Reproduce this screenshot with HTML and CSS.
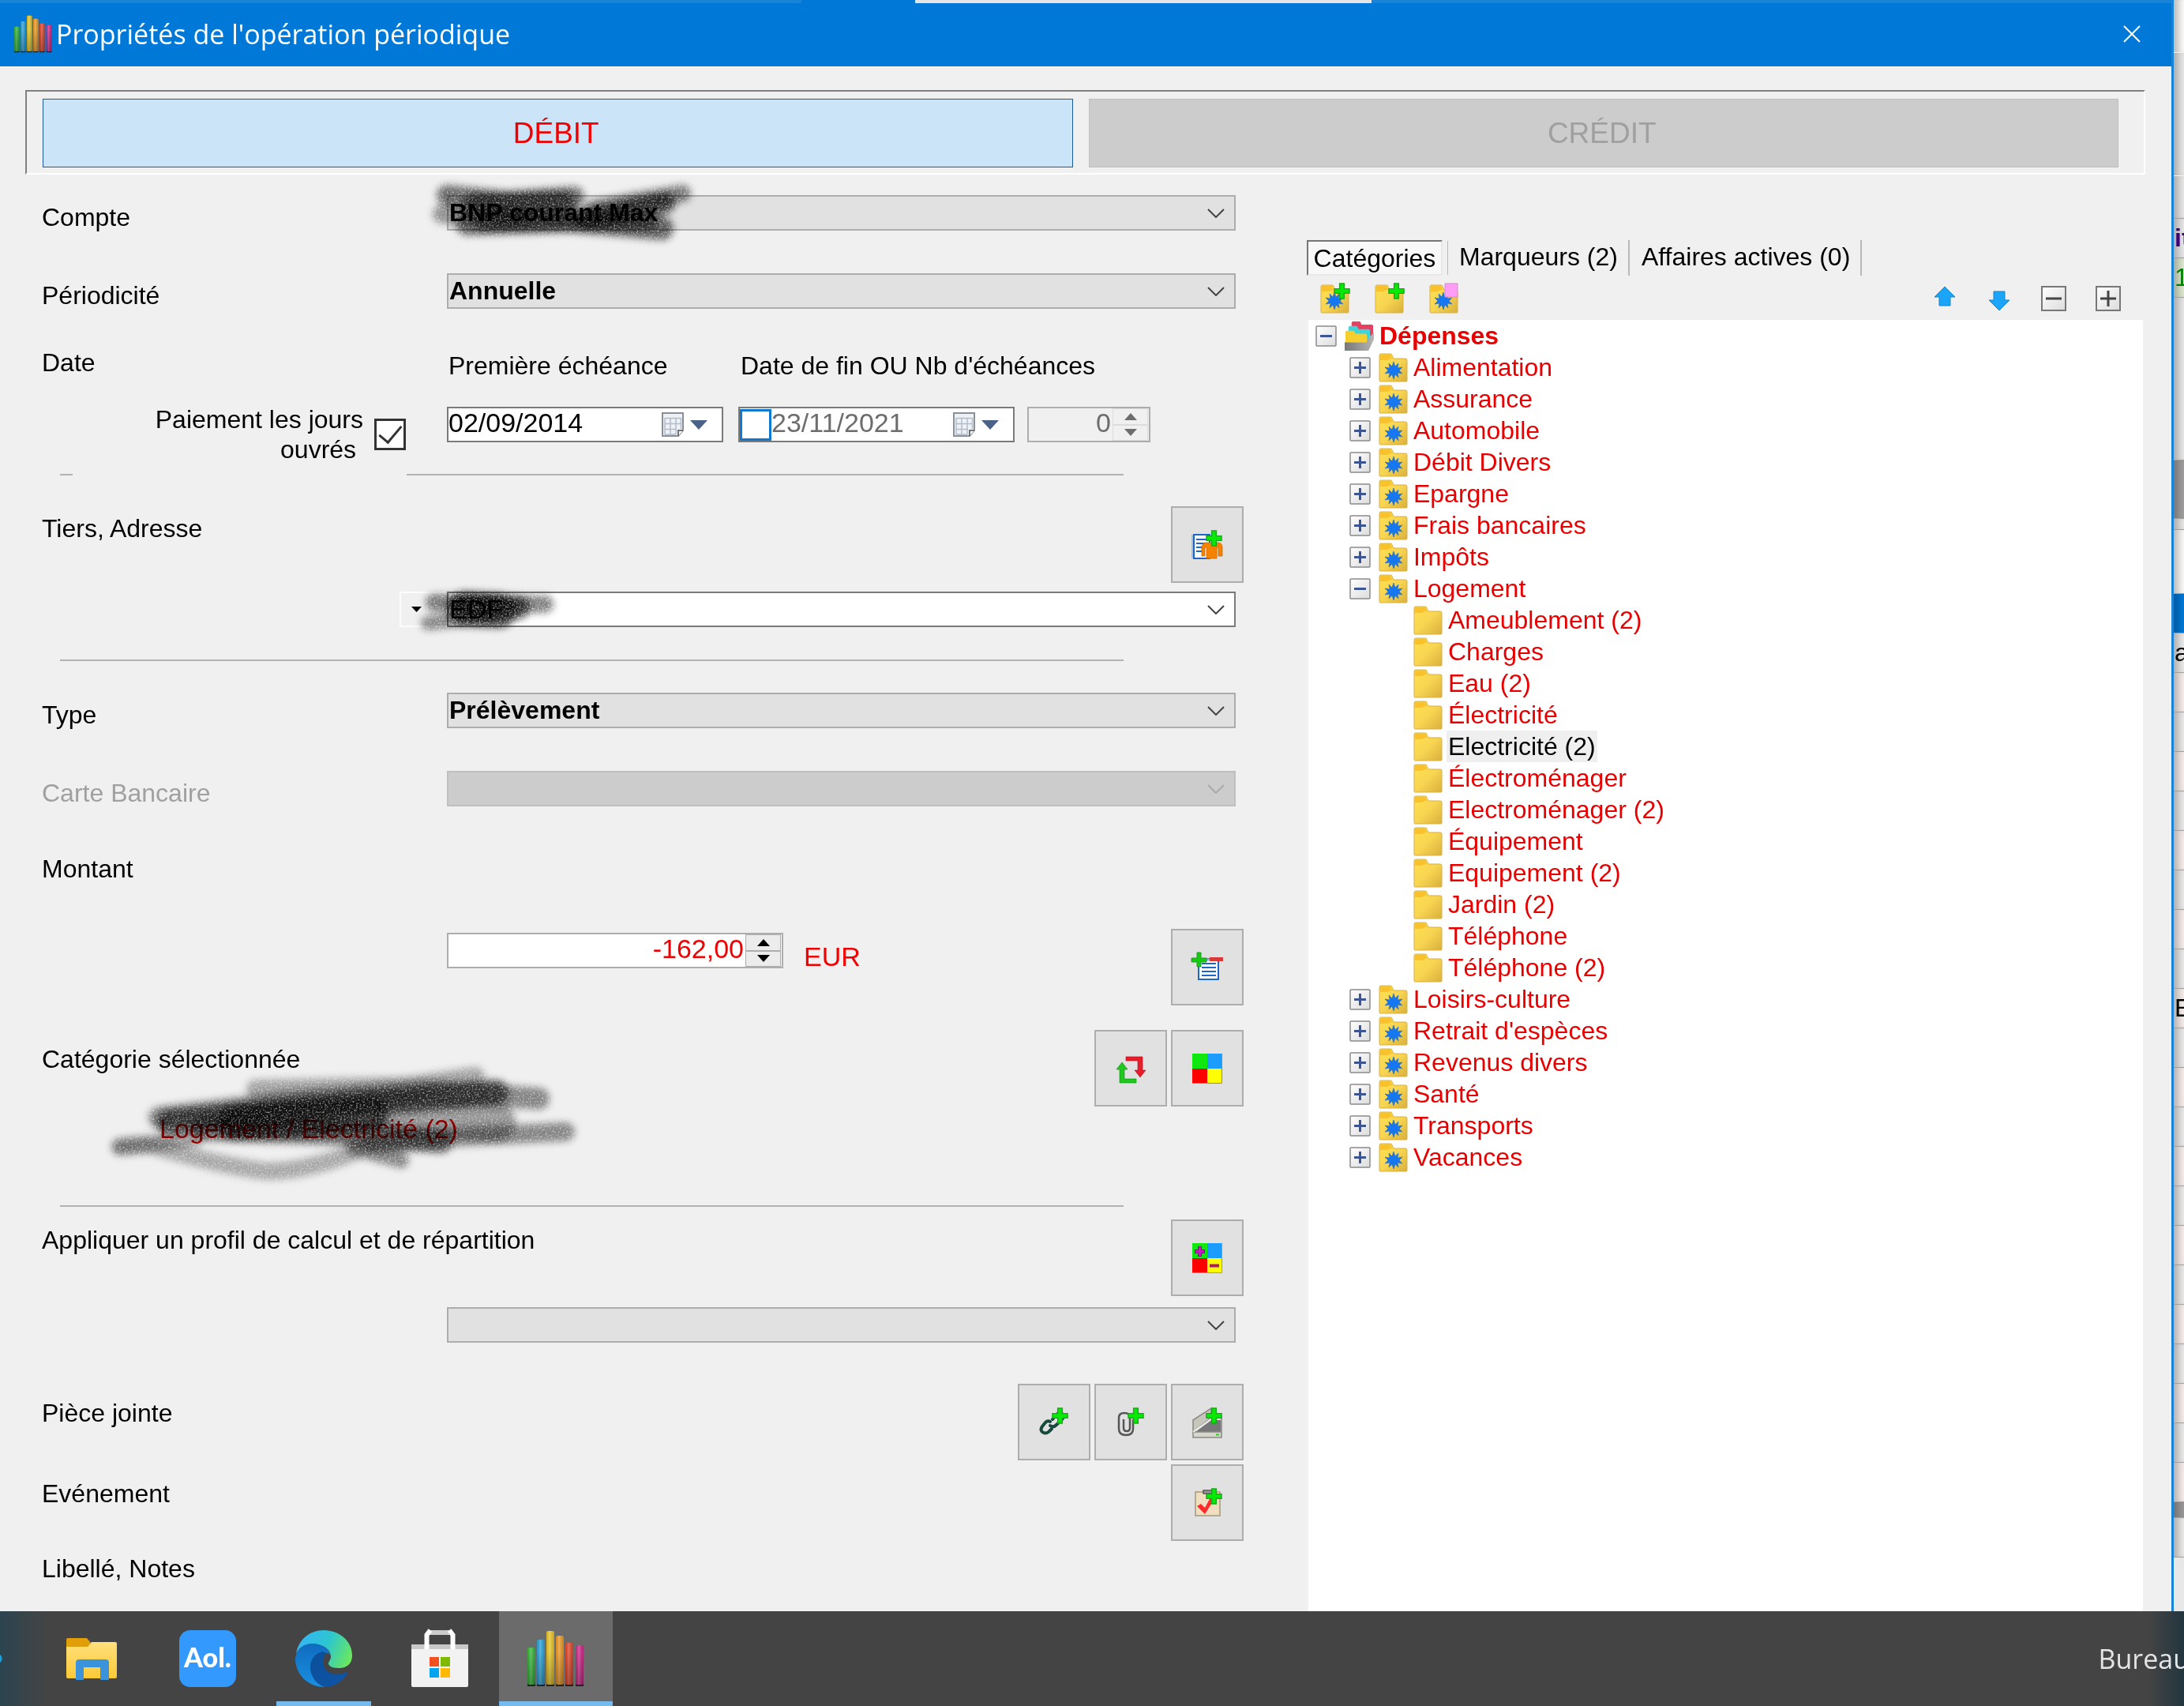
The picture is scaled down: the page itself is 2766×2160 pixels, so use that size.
FILE: index.html
```html
<!DOCTYPE html>
<html lang="fr">
<head>
<meta charset="utf-8">
<title>Propriétés de l'opération périodique</title>
<link rel="stylesheet" href="styles.css">
</head>
<body>
<svg class="defs" aria-hidden="true">
  <defs>
    <linearGradient id="g-folder" x1="0" y1="0" x2="1" y2="1"><stop offset="0" stop-color="#ffe04f"/><stop offset=".5" stop-color="#f8d552"/><stop offset="1" stop-color="#d9b03c"/></linearGradient>
    <linearGradient id="g-box" x1="0" y1="0" x2="1" y2="1"><stop offset="0" stop-color="#fff"/><stop offset="1" stop-color="#dcdcdc"/></linearGradient>
    <linearGradient id="g-tray" x1="0" y1="0" x2="1" y2="0"><stop offset="0" stop-color="#777"/><stop offset="1" stop-color="#b5b5b5"/></linearGradient>
    <linearGradient id="g-edge1" x1="0" y1=".4" x2="1" y2=".7"><stop offset="0" stop-color="#35b5f5"/><stop offset=".5" stop-color="#2cc6d0"/><stop offset="1" stop-color="#6ce85a"/></linearGradient>
    <linearGradient id="g-edge2" x1="0" y1="0" x2="0" y2="1"><stop offset="0" stop-color="#0f6cc0"/><stop offset="1" stop-color="#1a90e0"/></linearGradient>
    <linearGradient id="g-edge3" x1="0" y1="0" x2="1" y2="1"><stop offset="0" stop-color="#0a4f98"/><stop offset="1" stop-color="#1055a8"/></linearGradient>
    <linearGradient id="g-exp" x1="0" y1="0" x2="0" y2="1"><stop offset="0" stop-color="#ffe07c"/><stop offset="1" stop-color="#fec937"/></linearGradient>
    <linearGradient id="g-shine" x1="0" y1="0" x2="1" y2="0"><stop offset="0" stop-color="#000" stop-opacity=".08"/><stop offset=".4" stop-color="#fff" stop-opacity=".22"/><stop offset="1" stop-color="#000" stop-opacity=".15"/></linearGradient>
    <linearGradient id="g-shade" x1="0" y1="0" x2="0" y2="1"><stop offset="0" stop-color="#000" stop-opacity="0"/><stop offset="1" stop-color="#000" stop-opacity=".25"/></linearGradient>
    <filter id="brush" filterUnits="userSpaceOnUse" x="-40" y="-40" width="720" height="260">
      <feGaussianBlur in="SourceGraphic" stdDeviation="5" result="soft"/>
      <feTurbulence type="fractalNoise" baseFrequency=".45" numOctaves="2" seed="4" result="noise"/>
      <feColorMatrix in="noise" type="matrix" values="0 0 0 0 0  0 0 0 0 0  0 0 0 0 0  0 0 0 1.6 .15" result="grain"/>
      <feComposite in="soft" in2="grain" operator="in"/>
    </filter>
  </defs>
  <symbol id="i-chevron" viewBox="0 0 22 12"><path d="M1 1 11 11 21 1" fill="none" stroke="currentColor" stroke-width="2"/></symbol>
  <symbol id="i-plus" viewBox="0 0 22 22"><path d="M8 1h6v7h7v6h-7v7H8v-7H1V8h7z" fill="#06ea06" stroke="#1ea51e" stroke-width="1.5"/></symbol>
  <symbol id="i-star" viewBox="0 0 24 24"><path d="M12 1 14 7 18 3 17 9 23 8 19 12 23 16 17 15 18 21 14 17 12 23 10 17 6 21 7 15 1 16 5 12 1 8 7 9 6 3 10 7z" fill="#1577f2" stroke="#2b6aa8" stroke-width=".6"/></symbol>
  <symbol id="i-folder" viewBox="0 0 37 37"><path d="M1 35V3q0-2 2-2h12q2 0 2 2l2 4h15q2 0 2 2v26q0 1-1 1H2q-1 0-1-1z" fill="url(#g-folder)" stroke="#d8b040" stroke-width="1"/><path d="M2 9V3q0-1 1-1h12l2 5q-4 0-6 2z" fill="#f9c22c"/></symbol>
  <symbol id="i-cat" viewBox="0 0 37 37"><use href="#i-folder"/><use href="#i-star" x="7" y="10" width="24" height="24"/></symbol>
  <symbol id="i-drawer" viewBox="0 0 38 38"><path d="M9 2q0-2 2-2h9l2 4h13q2 0 2 2v13H9z" fill="#e84060"/><path d="M5 8q0-2 2-2h9l2 4h13q2 0 2 2v13H5z" fill="#3fd3da"/><path d="M38 14v9L31 38H0V27h27z" fill="url(#g-tray)"/><path d="M1 14q0-2 2-2h9l2 4h13q2 0 2 2v9H1z" fill="#f6cf2f"/></symbol>
  <symbol id="i-open" viewBox="0 0 27 27"><rect x="1" y="1" width="25" height="25" rx="1" fill="url(#g-box)" stroke="#8a8a8a" stroke-width="1.5"/><path d="M6 13.500h15" stroke="#3b5595" stroke-width="3"/></symbol>
  <symbol id="i-closed" viewBox="0 0 27 27"><use href="#i-open"/><path d="M13.500 6v15" stroke="#3b5595" stroke-width="3"/></symbol>
  <symbol id="i-cal" viewBox="0 0 28 32"><path d="M1 1h26v22l-6 7H1z" fill="#eef1f5" stroke="#8b9097" stroke-width="2"/><path d="M21 30v-7h6" fill="#fff" stroke="#6f747b" stroke-width="2"/><path d="M4 7.500h20M4 14.500h20M4 21.500h15M4 28h14M4 7v21M11 7v21M18 7v21M24.500 7v14" stroke="#b3bccb" stroke-width="1.500" fill="none"/></symbol>
  <symbol id="i-bars" viewBox="0 0 72 70">
    <path d="M0 67h10v3H0zM12 67h10v3H12zM24 67h10v3H24zM36 67h10v3H36zM48 67h10v3H48zM61 67h10v3H61z" fill="#222"/>
    <rect x="0" y="21" width="10" height="47" rx="2" fill="#3ab83c"/><rect x="12" y="11" width="10" height="57" rx="2" fill="#2ea3d8"/><rect x="24" y="0" width="10" height="68" rx="2" fill="#e8c62a"/><rect x="36" y="6" width="10" height="62" rx="2" fill="#ee9a26"/><rect x="48" y="15" width="10" height="53" rx="2" fill="#e2492c"/><rect x="61" y="18" width="10" height="50" rx="2" fill="#d22c8c"/>
    <g fill="url(#g-shine)"><rect x="0" y="21" width="10" height="47"/><rect x="12" y="11" width="10" height="57"/><rect x="24" y="0" width="10" height="68"/><rect x="36" y="6" width="10" height="62"/><rect x="48" y="15" width="10" height="53"/><rect x="61" y="18" width="10" height="50"/></g>
    <g fill="url(#g-shade)"><rect x="0" y="27" width="10" height="41"/><rect x="12" y="27" width="10" height="41"/><rect x="24" y="27" width="10" height="41"/><rect x="36" y="27" width="10" height="41"/><rect x="48" y="27" width="10" height="41"/><rect x="61" y="27" width="10" height="41"/></g>
  </symbol>
</svg>

<div class="desktop">
  <main class="dialog">
    <header class="titlebar">
      <div class="edge"><i></i><i></i><i></i><i></i></div>
      <div class="title">
        <svg class="app-icon"><use href="#i-bars"/></svg>
        <h1>Propriétés de l'opération périodique</h1>
        <button class="close" aria-label="Fermer"><svg viewBox="0 0 20 20"><path d="M0 0 20 20M20 0 0 20" stroke="#fff" stroke-width="2"/></svg></button>
      </div>
    </header>

    <div class="sense">
      <button class="debit">DÉBIT</button>
      <button class="credit" disabled>CRÉDIT</button>
    </div>

    <div class="panes">
      <form class="form">
        <div class="row">
          <label for="compte">Compte</label>
          <div class="combo"><select id="compte"><option>BNP courant Max</option></select><svg class="chev"><use href="#i-chevron"/></svg>
            <svg class="scribble scribble-a" viewBox="0 0 360 90" aria-hidden="true"><g filter="url(#brush)" fill="none" stroke="#000" stroke-linecap="round" stroke-linejoin="round"><path d="M24 22 100 30 185 24" stroke-width="26" stroke-opacity=".55"/><path d="M18 46 120 50" stroke-width="24" stroke-opacity=".4"/><path d="M50 58 180 54 296 64" stroke-width="30" stroke-opacity=".6"/><path d="M210 40 260 30 322 20" stroke-width="22" stroke-opacity=".5"/><path d="M200 52 300 32" stroke-width="26" stroke-opacity=".7"/><path d="M60 36 170 34" stroke-width="34" stroke-opacity=".6"/><path d="M70 58 280 56" stroke-width="22" stroke-opacity=".55"/></g></svg>
          </div>
        </div>
        <div class="row after-l">
          <label for="periode">Périodicité</label>
          <div class="combo"><select id="periode"><option>Annuelle</option></select><svg class="chev"><use href="#i-chevron"/></svg></div>
        </div>
        <div class="row heads">
          <span>Date</span>
          <div class="date-cols"><label for="d1">Première échéance</label><label for="d2">Date de fin OU Nb d'échéances</label></div>
        </div>
        <div class="row dates">
          <div class="worked"><label for="ouvres">Paiement les jours ouvrés&nbsp;</label><input class="tick" type="checkbox" id="ouvres" checked></div>
          <div class="date-fields">
            <div class="datebox"><input id="d1" type="text" value="02/09/2014"><svg class="cal"><use href="#i-cal"/></svg><svg class="drop" viewBox="0 0 22 12"><path d="M0 0h22L11 12z" fill="#4b6288"/></svg></div>
            <div class="datebox off"><input class="blue-tick" type="checkbox" aria-label="Activer la date de fin"><input id="d2" type="text" value="23/11/2021"><svg class="cal"><use href="#i-cal"/></svg><svg class="drop" viewBox="0 0 22 12"><path d="M0 0h22L11 12z" fill="#4b6288"/></svg></div>
            <div class="spin off"><input type="text" value="0" aria-label="Nombre d'échéances" disabled><div class="arrows"><button type="button" disabled aria-label="Plus"><svg viewBox="0 0 16 9"><path d="M0 9h16L8 0z"/></svg></button><button type="button" disabled aria-label="Moins"><svg viewBox="0 0 16 9"><path d="M0 0h16L8 9z"/></svg></button></div></div>
          </div>
        </div>
        <div class="rule split"><i></i><i></i></div>

        <div class="row tiers">
          <label for="tiers">Tiers, Adresse</label>
          <div class="tools"><button type="button" aria-label="Ajouter un tiers"><svg viewBox="0 0 38 38"><path d="M2 6h20v30H2z" fill="#fff" stroke="#1e66c8" stroke-width="2"/><path d="M0 6v30" stroke="#9cc0ee" stroke-width="2"/><path d="M5 12h16M5 17h14M5 22h10M5 27h8" stroke="#1e66c8" stroke-width="2"/><path d="M12 33V22q0-6 6-6h14q6 0 6 6v11h-5V22h-2v14H18V22h-2v11z" fill="#f58200" stroke="#c76a00" stroke-width=".8"/><use href="#i-plus" x="17" y="0" width="21" height="21"/></svg></button></div>
        </div>
        <div class="row tiers-field">
          <button type="button" class="mini" aria-label="Options"><svg viewBox="0 0 13 7"><path d="M0 0h13L6.500 7z"/></svg></button>
          <div class="combo white"><select id="tiers"><option>EDF</option></select><svg class="chev"><use href="#i-chevron"/></svg>
            <svg class="scribble scribble-b" viewBox="0 0 200 70" aria-hidden="true"><g filter="url(#brush)" fill="none" stroke="#000" stroke-linecap="round"><path d="M34 26 174 28" stroke-width="22" stroke-opacity=".5"/><path d="M26 52 100 44" stroke-width="18" stroke-opacity=".45"/><path d="M70 30 140 32" stroke-width="30" stroke-opacity=".65"/><path d="M72 34 116 36" stroke-width="44" stroke-opacity=".75"/></g></svg>
          </div>
        </div>
        <div class="rule"></div>

        <div class="row type">
          <label for="type">Type</label>
          <div class="combo"><select id="type"><option>Prélèvement</option></select><svg class="chev"><use href="#i-chevron"/></svg></div>
        </div>
        <div class="row after-l">
          <label for="carte" class="muted">Carte Bancaire</label>
          <div class="combo dead"><select id="carte" disabled><option></option></select><svg class="chev"><use href="#i-chevron"/></svg></div>
        </div>
        <div class="row montant"><label for="montant">Montant</label></div>
        <div class="row amount">
          <span></span>
          <div class="amount-line">
            <div class="spin money"><input id="montant" type="text" value="-162,00"><div class="arrows"><button type="button" aria-label="Augmenter"><svg viewBox="0 0 16 9"><path d="M0 9h16L8 0z"/></svg></button><button type="button" aria-label="Diminuer"><svg viewBox="0 0 16 9"><path d="M0 0h16L8 9z"/></svg></button></div></div>
            <span class="eur">EUR</span>
            <div class="tools"><button type="button" aria-label="Calculer"><svg viewBox="0 0 38 38"><path d="M8 8h25v26H8z" fill="#fff" stroke="#1e66c8" stroke-width="2"/><path d="M8 9h25" stroke="#7fb0ea" stroke-width="3"/><path d="M12 14h18M12 19h18M12 24h18M12 29h18" stroke="#1e66c8" stroke-width="2"/><path d="M22 6h17v5H22z" fill="#d83a3a"/><path d="M6 0h5v7h7v5h-7v6H6v-6H-1V7h7z" fill="#12cc12" stroke="#2a9a2a" stroke-width="1"/></svg></button></div>
          </div>
        </div>
        <div class="row cat">
          <span>Catégorie sélectionnée</span>
          <div class="tools"><button type="button" aria-label="Inverser"><svg viewBox="0 0 38 38"><path d="M13 4h21v17h4l-7 9-7-9h4V9H13z" fill="#e81d2c" stroke="#a80f1d" stroke-width=".6"/><path d="M8 11l7 9h-4v12h15v5H5V20H1z" fill="#1fc81f" stroke="#128812" stroke-width=".6"/></svg></button><button type="button" aria-label="Couleurs"><svg viewBox="0 0 38 38"><path d="M0 0h19v19H0z" fill="#0fe80f"/><path d="M19 0h18v19H19z" fill="#1a9dff"/><path d="M0 19h19v18H0z" fill="#f00"/><path d="M19 19h18v18H19z" fill="#ff0"/><path d="M37.500 0v37.500H0" fill="none" stroke="#888"/></svg></button></div>
        </div>
        <p class="chosen"><span>Logement / Electricité (2)</span>
          <svg class="scribble scribble-c" viewBox="0 0 600 160" aria-hidden="true"><g filter="url(#brush)" fill="none" stroke="#000" stroke-linecap="round" stroke-linejoin="round"><path d="M206 38 400 34 484 22" stroke-width="24" stroke-opacity=".32"/><path d="M34 111 70 108Q160 135 220 142 270 142 330 118" stroke-width="22" stroke-opacity=".3"/><path d="M34 111 70 108 130 100" stroke-width="20" stroke-opacity=".35"/><path d="M84 74 250 54 420 40 564 50" stroke-width="28" stroke-opacity=".45"/><path d="M96 80 240 66 510 42" stroke-width="32" stroke-opacity=".65"/><path d="M140 88 330 94 440 104" stroke-width="30" stroke-opacity=".6"/><path d="M180 80 350 70" stroke-width="46" stroke-opacity=".75"/><path d="M350 108 470 98 598 92" stroke-width="24" stroke-opacity=".45"/><path d="M380 70 510 80" stroke-width="50" stroke-opacity=".38"/><path d="M330 112 390 128" stroke-width="20" stroke-opacity=".45"/></g></svg>
        </p>
        <div class="rule"></div>

        <div class="row profil">
          <label for="profil">Appliquer un profil de calcul et de répartition</label>
          <div class="tools"><button type="button" aria-label="Gérer les profils"><svg viewBox="0 0 38 38"><path d="M0 0h19v19H0z" fill="#0fe80f"/><path d="M19 0h18v19H19z" fill="#1a9dff"/><path d="M0 19h19v18H0z" fill="#f00"/><path d="M19 19h18v18H19z" fill="#ff0"/><path d="M9.500 4v13M3 10.500h13" stroke="#7a1d7a" stroke-width="5"/><path d="M9.500 5v11M4 10.500h11" stroke="#c41ac4" stroke-width="3"/><path d="M22 28.500h12" stroke="#b01a70" stroke-width="4"/><path d="M37.500 0v37.500H0" fill="none" stroke="#999"/></svg></button></div>
        </div>
        <div class="row">
          <span></span>
          <div class="combo"><select id="profil"><option></option></select><svg class="chev"><use href="#i-chevron"/></svg></div>
        </div>
        <div class="row piece">
          <span>Pièce jointe</span>
          <div class="tools">
            <button type="button" aria-label="Ajouter un lien"><svg viewBox="0 0 38 38"><g fill="none" stroke="#164a3c" stroke-width="4" stroke-linecap="round"><path d="M14 18q-3-2-6 1L4 24q-3 4 0 7 4 3 8 0l4-4"/><path d="M14 23q4 3 8-1l8-8q2-3-1-6-4-2-7 1l-5 6"/></g><use href="#i-plus" x="16" y="0" width="21" height="21"/></svg></button>
            <button type="button" aria-label="Joindre un fichier"><svg viewBox="0 0 38 38"><path d="M10 15v11q0 4 4 4t4-4V13q0-6-7-6t-7 6v14q0 8 9 8t9-8V15" fill="none" stroke="#555" stroke-width="2.500"/><use href="#i-plus" x="15" y="0" width="21" height="21"/></svg></button>
            <button type="button" aria-label="Numériser"><svg viewBox="0 0 38 38"><path d="M1 16 24 1v12L1 31z" fill="#c6c6bc" stroke="#8a8a82" stroke-width="1.500"/><path d="M4 31 24 16h13v15z" fill="#77777a"/><path d="M1 31h36v7H1z" fill="#d6d6cc" stroke="#8a8a82" stroke-width="1.500"/><path d="M34 13h3v25" fill="none" stroke="#999" stroke-width="2"/><path d="M1 31 25 14" stroke="#eee" stroke-width="2"/><path d="M30 34.500h4" stroke="#1fd01f" stroke-width="2"/><use href="#i-plus" x="17" y="0" width="21" height="21"/></svg></button>
          </div>
        </div>
        <div class="row event">
          <span>Evénement</span>
          <div class="tools"><button type="button" aria-label="Ajouter un événement"><svg viewBox="0 0 38 38"><path d="M4 5h31v30H4z" fill="#efdfc0" stroke="#a8987a" stroke-width="1.500"/><path d="M14 3h11v4H14z" fill="#999" stroke="#555" stroke-width="1.500"/><path d="M6 23l5-3 5 5L23 12l5 2-12 19z" fill="#ff2a2a"/><use href="#i-plus" x="17" y="0" width="21" height="21"/></svg></button></div>
        </div>
        <div class="row notes"><span>Libellé, Notes</span></div>
      </form>

      <section class="side">
        <div class="tabs">
          <button class="on">Catégories</button><button>Marqueurs (2)</button><button>Affaires actives (0)</button>
        </div>
        <div class="bar">
          <button aria-label="Nouvelle catégorie"><svg class="ic" viewBox="0 0 37 39"><use href="#i-folder" y="2" width="37" height="37"/><use href="#i-star" x="6" y="11" width="24" height="24"/><use href="#i-plus" x="17" y="0" width="21" height="21"/></svg></button>
          <button aria-label="Nouvelle sous-catégorie"><svg class="ic" viewBox="0 0 37 39"><use href="#i-folder" y="2" width="37" height="37"/><use href="#i-plus" x="17" y="0" width="21" height="21"/></svg></button>
          <button aria-label="Modifier la catégorie"><svg class="ic" viewBox="0 0 37 39"><use href="#i-folder" y="2" width="37" height="37"/><use href="#i-star" x="6" y="11" width="24" height="24"/><path d="M20 1h16v17H20z" fill="#ff9cf5" stroke="#d88ad0"/></svg></button>
          <span class="fill"></span>
          <button aria-label="Monter"><svg class="ar" viewBox="0 0 28 32"><path d="M14 1 27 14h-6v11H7V14H1z" fill="#1aa5f8" stroke="#1883c8"/></svg></button>
          <button aria-label="Descendre"><svg class="ar" viewBox="0 0 28 32"><path d="M14 31 27 18h-6V7H7v11H1z" fill="#1aa5f8" stroke="#1883c8"/></svg></button>
          <button aria-label="Tout replier"><svg class="ar" viewBox="0 0 32 32"><path d="M1 1h30v30H1z" fill="url(#g-box)" stroke="#777" stroke-width="2"/><path d="M6 16h20" stroke="#444" stroke-width="3"/></svg></button>
          <button aria-label="Tout déplier"><svg class="ar" viewBox="0 0 32 32"><path d="M1 1h30v30H1z" fill="url(#g-box)" stroke="#777" stroke-width="2"/><path d="M6 16h20M16 6v20" stroke="#444" stroke-width="3"/></svg></button>
        </div>
        <div class="tree">
          <ul>
            <li><div class="node"><svg class="ex"><use href="#i-open"/></svg><svg class="fo"><use href="#i-drawer"/></svg><b>Dépenses</b></div>
              <ul>
                <li><div class="node"><svg class="ex"><use href="#i-closed"/></svg><svg class="fo"><use href="#i-cat"/></svg><span>Alimentation</span></div></li>
                <li><div class="node"><svg class="ex"><use href="#i-closed"/></svg><svg class="fo"><use href="#i-cat"/></svg><span>Assurance</span></div></li>
                <li><div class="node"><svg class="ex"><use href="#i-closed"/></svg><svg class="fo"><use href="#i-cat"/></svg><span>Automobile</span></div></li>
                <li><div class="node"><svg class="ex"><use href="#i-closed"/></svg><svg class="fo"><use href="#i-cat"/></svg><span>Débit Divers</span></div></li>
                <li><div class="node"><svg class="ex"><use href="#i-closed"/></svg><svg class="fo"><use href="#i-cat"/></svg><span>Epargne</span></div></li>
                <li><div class="node"><svg class="ex"><use href="#i-closed"/></svg><svg class="fo"><use href="#i-cat"/></svg><span>Frais bancaires</span></div></li>
                <li><div class="node"><svg class="ex"><use href="#i-closed"/></svg><svg class="fo"><use href="#i-cat"/></svg><span>Impôts</span></div></li>
                <li><div class="node"><svg class="ex"><use href="#i-open"/></svg><svg class="fo"><use href="#i-cat"/></svg><span>Logement</span></div>
                  <ul class="leaves">
                    <li><div class="node"><svg class="fo"><use href="#i-folder"/></svg><span>Ameublement (2)</span></div></li>
                    <li><div class="node"><svg class="fo"><use href="#i-folder"/></svg><span>Charges</span></div></li>
                    <li><div class="node"><svg class="fo"><use href="#i-folder"/></svg><span>Eau (2)</span></div></li>
                    <li><div class="node"><svg class="fo"><use href="#i-folder"/></svg><span>Électricité</span></div></li>
                    <li><div class="node"><svg class="fo"><use href="#i-folder"/></svg><span class="picked">Electricité (2)</span></div></li>
                    <li><div class="node"><svg class="fo"><use href="#i-folder"/></svg><span>Électroménager</span></div></li>
                    <li><div class="node"><svg class="fo"><use href="#i-folder"/></svg><span>Electroménager (2)</span></div></li>
                    <li><div class="node"><svg class="fo"><use href="#i-folder"/></svg><span>Équipement</span></div></li>
                    <li><div class="node"><svg class="fo"><use href="#i-folder"/></svg><span>Equipement (2)</span></div></li>
                    <li><div class="node"><svg class="fo"><use href="#i-folder"/></svg><span>Jardin (2)</span></div></li>
                    <li><div class="node"><svg class="fo"><use href="#i-folder"/></svg><span>Téléphone</span></div></li>
                    <li><div class="node"><svg class="fo"><use href="#i-folder"/></svg><span>Téléphone (2)</span></div></li>
                  </ul></li>
                <li><div class="node"><svg class="ex"><use href="#i-closed"/></svg><svg class="fo"><use href="#i-cat"/></svg><span>Loisirs-culture</span></div></li>
                <li><div class="node"><svg class="ex"><use href="#i-closed"/></svg><svg class="fo"><use href="#i-cat"/></svg><span>Retrait d'espèces</span></div></li>
                <li><div class="node"><svg class="ex"><use href="#i-closed"/></svg><svg class="fo"><use href="#i-cat"/></svg><span>Revenus divers</span></div></li>
                <li><div class="node"><svg class="ex"><use href="#i-closed"/></svg><svg class="fo"><use href="#i-cat"/></svg><span>Santé</span></div></li>
                <li><div class="node"><svg class="ex"><use href="#i-closed"/></svg><svg class="fo"><use href="#i-cat"/></svg><span>Transports</span></div></li>
                <li><div class="node"><svg class="ex"><use href="#i-closed"/></svg><svg class="fo"><use href="#i-cat"/></svg><span>Vacances</span></div></li>
              </ul></li>
          </ul>
        </div>
      </section>
    </div>
  </main>

  <aside class="behind">
    <div class="b-top"></div><div class="b-band"></div><div class="b-band2"></div>
    <div class="b-row b-it">it</div><div class="b-row b-one">1</div>
    <div class="b-gap"></div><div class="b-dark"></div><div class="b-thin"></div><div class="b-white"></div><div class="b-row b-blue"></div>
    <div class="b-row g">a</div>
    <div class="b-row p"></div><div class="b-row g"></div><div class="b-row p"></div><div class="b-row g"></div><div class="b-row p"></div><div class="b-row g"></div><div class="b-row p"></div><div class="b-row g"></div>
    <div class="b-row p">E</div>
    <div class="b-row g"></div><div class="b-row p"></div><div class="b-row g"></div><div class="b-row p"></div><div class="b-row g"></div><div class="b-row p"></div><div class="b-row g"></div><div class="b-row p"></div><div class="b-row g"></div><div class="b-row p"></div><div class="b-row g"></div><div class="b-row p"></div>
    <div class="b-scroll"></div><div class="b-row g"></div>
  </aside>
</div>

<footer class="taskbar">
  <span class="sliver"></span>
  <button aria-label="Explorateur"><svg class="explorer" viewBox="0 0 64 54"><path d="M0 3q0-2 2-2h24l5 6-4 6H0z" fill="#e09f08"/><path d="M0 12h27l5-6h30q2 0 2 2v42q0 2-2 2H2q-2 0-2-2z" fill="url(#g-exp)"/><path d="M12 54V32q0-4 4-4h34q4 0 4 4v22H43V38H22v16z" fill="#3b93dc"/></svg></button>
  <button><span class="aol">Aol.</span></button>
  <button class="running" aria-label="Edge"><svg viewBox="0 0 72 72"><path d="M0 36C1 25 10 17 21 17c12 0 21 5 24 15-4-5-13-4-17 0-8 10-2 34 10 40C14 72 0 54 0 36z" fill="url(#g-edge2)"/><path d="M36 27c-10 1-17 9-17 20 0 13 10 23 19 25 13-1 23-8 28-17 1-2 0-3-1-2-6 3-14 4-21 1-9-5-11-15-6-24z" fill="url(#g-edge3)"/><path d="M1 30C4 12 18 0 36 0c20 0 36 14 36 32 0 10-6 16-17 16-9 0-13-3-13-6 0-2 3-4 3-9 0-9-11-16-24-16C11 17 3 24 1 30z" fill="url(#g-edge1)"/></svg></button>
  <button aria-label="Store"><svg viewBox="0 0 72 72"><path d="M0 18h72v7H0z" fill="#c8c8c8"/><path d="M0 24h72v46q0 2-2 2H2q-2 0-2-2z" fill="#f2f2f2"/><path d="M22 0h28l2 6H20z" fill="#ccc"/><path d="M19.500 24V6L24 0M52.500 24V6L48 0" fill="none" stroke="#fff" stroke-width="6"/><path d="M23 34h12v12H23z" fill="#f25022"/><path d="M37 34h12v12H37z" fill="#7fba00"/><path d="M23 48h12v12H23z" fill="#00a4ef"/><path d="M37 48h12v12H37z" fill="#ffb900"/></svg></button>
  <button class="current" aria-label="Comptes"><svg><use href="#i-bars"/></svg></button>
  <span class="desk">Bureau</span>
</footer>
</body>
</html>
```
FILE: styles.css
```css
* { box-sizing: border-box; }
body {
  margin: 0;
  min-height: 100vh;
  display: flex;
  flex-direction: column;
  background: #f0f0f0;
  color: #000;
  font: 32px/38px "Liberation Sans", Arial, sans-serif;
  overflow-x: hidden;
}
button, input, select { font: inherit; color: inherit; margin: 0; padding: 0; border-radius: 0; }
button { cursor: pointer; }
svg { display: block; overflow: visible; }
.defs { position: absolute; width: 0; height: 0; }
ul { list-style: none; margin: 0; padding: 0; }

.desktop { flex: 1; display: flex; }
.dialog { flex: 1; min-width: 0; display: flex; flex-direction: column; border-right: 3px solid #1883d7; }

/* title bar */
.titlebar { background: #0078d7; color: #fff; }
.edge { display: grid; grid-template-columns: 1015fr 144fr 578fr 1013fr; height: 4px; }
.edge i:nth-child(1), .edge i:nth-child(4) { background: #1883d7; }
.edge i:nth-child(3) { background: #e5e5e5; }
.title { display: flex; align-items: center; gap: 5px; height: 80px; padding: 0 40px 2px 18px; }
.app-icon { width: 48px; height: 48px; }
.title h1 { flex: 1; margin: 0; font: 34px/48px "Open Sans", "Noto Sans", sans-serif; }
.close { width: 20px; height: 20px; border: 0; background: none; }
.close svg { width: 20px; height: 20px; }

/* debit / credit switch */
.sense {
  display: grid;
  grid-template-columns: 1fr 1fr;
  gap: 20px;
  margin: 30px 33px 0 32px;
  padding: 9px 32px 7px 20px;
  border: 2px solid;
  border-color: #808080 #fff #fff #808080;
}
.sense button { height: 87px; padding-right: 4px; font-size: 37px; border: 1px solid #1c5a99; background: #cce4f7; color: #f00000; }
.sense .credit { background: #ccc; border-color: #bfbfbf; color: #a0a0a0; }

.panes { flex: 1; display: grid; grid-template-columns: 589fr 411fr; gap: 80px; padding: 0 33px 0 53px; }

/* form */
.form { padding-top: 26px; }
.row { display: grid; grid-template-columns: 513px 1fr; align-items: start; }
.row > label, .row > span { padding-top: 9px; white-space: nowrap; }
.after-l { margin-top: 52px; }
.muted { color: #a0a0a0; }
.combo { position: relative; display: grid; align-items: center; margin-right: 10px; }
.combo > select, .combo > .chev { grid-area: 1 / 1; }
.combo select {
  appearance: none;
  width: 100%;
  height: 45px;
  padding: 0 50px 2px 1px;
  border: 2px solid #adadad;
  background: #e1e1e1;
  font-weight: bold;
}
.combo .chev { justify-self: end; width: 22px; height: 12px; margin-right: 14px; color: #444; pointer-events: none; }
.combo.white select { background: #fff; border-color: #7a7a7a; font-weight: normal; font-size: 34px; }
.combo.dead select { background: #ccc; border-color: #bfbfbf; opacity: 1; }
.combo.dead .chev { color: #aaa; }

.heads { margin-top: 42px; }
.heads > span { padding-top: 5px; }
.date-cols { display: flex; padding: 9px 0 0 2px; }
.date-cols label { width: 370px; white-space: nowrap; }
.dates { margin-top: 30px; }
.worked { display: flex; align-items: center; gap: 14px; justify-content: flex-end; padding-right: 52px; }
.worked label { width: 280px; text-align: right; }
.tick {
  appearance: none;
  width: 40px;
  height: 40px;
  border: 3px solid #333;
  background: #fff;
  display: grid;
  place-items: center;
}
.tick:checked::after { content: ""; width: 13px; height: 25px; border: solid #333; border-width: 0 3px 3px 0; transform: rotate(40deg) translate(-2px, -3px); }
.date-fields { display: flex; padding-top: 3px; }
.datebox { display: flex; align-items: center; width: 350px; height: 45px; margin-right: 19px; border: 2px solid #7a7a7a; background: #fff; padding-right: 18px; }
.off { margin-right: 16px; color: #6d6d6d; }
.datebox input[type="text"] { flex: 1; min-width: 0; border: 0; background: none; font-size: 34px; padding-bottom: 5px; }
.blue-tick { appearance: none; width: 40px; height: 40px; border: 3px solid #0f78d0; background: #fff; }
.cal { width: 28px; height: 32px; margin-right: 8px; }
.drop { width: 22px; height: 12px; }
.spin { display: flex; width: 156px; height: 45px; border: 2px solid #adadad; }
.spin.off { margin-right: 0; }
.spin input { flex: 1; min-width: 0; border: 0; background: none; text-align: right; font-size: 34px; padding: 0 1px 5px 0; }
.arrows { display: grid; grid-template-rows: 1fr 1fr; width: 47px; padding: 0 1px; }
.arrows button { display: grid; place-items: center; border: 1px solid #dcdcdc; background: #f0f0f0; }
.arrows svg { width: 16px; height: 9px; fill: currentColor; }
.spin.money { width: 426px; background: #fff; border-color: #adadad; color: #f00000; }
.money .arrows button { border-color: #adadad; background: #ececec; color: #000; }

.rule { height: 2px; margin-left: 23px; margin-right: 152px; background: #b2b2b2; }
.rule.split { display: grid; grid-template-columns: 16px 1fr; gap: 423px; margin-top: 12px; background: none; }
.rule.split i { background: #b2b2b2; }

.tools { display: flex; justify-content: flex-end; gap: 5px; }
.tools button { width: 92px; height: 97px; display: grid; place-items: center; border: 2px solid #adadad; background: #e1e1e1; }
.tools svg { width: 38px; height: 38px; }

.tiers { margin-top: 39px; }
.tiers-field { margin-top: 11px; margin-left: 453px; grid-template-columns: 60px 1fr; align-items: stretch; }
.mini { border: 2px solid #fcfcfc; border-right: 0; background: none; padding-left: 13px; }
.mini svg { width: 13px; height: 7px; }
.tiers-field + .rule { margin-top: 41px; }
.type { margin-top: 40px; }
.montant { margin-top: 49px; }
.amount { margin-top: 57px; }
.amount-line { display: flex; align-items: flex-start; }
.amount-line .spin { margin-top: 5px; }
.eur { margin: 16px 0 0 26px; font-size: 34px; color: #f00000; }
.amount-line .tools { margin-left: auto; }
.cat { margin-top: 31px; }
.cat > span, .piece > span, .event > span { padding-top: 18px; }
.chosen { position: relative; margin: 9px 0 78px 149px; font-size: 34px; color: #e00000; }
.profil { margin-top: 16px; }
.profil > label { padding-top: 7px; }
.profil + .row { margin-top: 14px; }
.piece { margin-top: 52px; }
.event { margin-top: 5px; }
.notes { margin-top: 7px; padding-bottom: 20px; }

/* brush strokes lie over the fields */
.scribble { position: absolute; pointer-events: none; mix-blend-mode: multiply; }
.scribble-a { left: -24px; top: -22px; width: 360px; height: 90px; }
.scribble-b { left: -50px; top: -12px; width: 200px; height: 70px; }
.scribble-c { left: -84px; top: -69px; width: 600px; height: 160px; }

/* category pane */
.side { display: flex; flex-direction: column; padding-top: 83px; min-width: 0; }
.tabs { display: flex; height: 45px; }
.tabs button { border: 0; border-right: 2px solid #b8b8b8; background: none; padding: 0 13px 4px 15px; white-space: nowrap; }
.tabs .on { width: 172px; margin-right: 6px; padding: 0; border: 2px solid; border-color: #757575 #e8e8e8 #e8e8e8 #757575; background: #f8f8f8; box-shadow: 7px 0 0 -1px #f0f0f0, 8px 0 0 -1px #b8b8b8; }
.bar { display: flex; align-items: center; padding: 7px 13px 6px 1px; }
.bar button { width: 69px; height: 43px; border: 0; background: none; display: grid; place-items: center; }
.bar .ic { width: 37px; height: 39px; }
.bar .ar { width: 32px; height: 32px; }
.fill { flex: 1; }
.tree { flex: 1; margin: 0 3px 0 2px; padding: 0 0 0 9px; background: #fff; color: #e80000; }
.tree ul ul { padding-left: 43px; }
.tree .leaves { padding-left: 81px; }
.node { display: flex; align-items: center; height: 40px; white-space: nowrap; }
.ex { width: 27px; height: 27px; margin-right: 10px; }
.fo { width: 37px; height: 37px; margin-right: 5px; }
.node span, .node b { padding: 0 2px; line-height: 40px; }
.picked { background: #efefef; color: #000; }

/* window that shows behind the dialog */
.behind { width: 13px; overflow: hidden; background: #e8e8e8; }
.behind > div { border-bottom: 1px solid #a0a0a0; box-shadow: inset 12px 0 10px -6px #0004; }
.behind > .b-top, .behind > .b-band { border-color: #f4f4f4; }
.b-top { height: 67px; background: #fbfbfb; }
.b-band { height: 156px; }
.b-band2 { height: 54px; }
.b-row { height: 50px; line-height: 49px; padding-left: 1px; }
.b-it { color: #40007a; font-weight: bold; }
.b-one { color: #008000; background: #dfe8cf; }
.b-gap { height: 206px; }
.b-dark { height: 74px; background: #a0a0a0; }
.b-thin { height: 14px; }
.b-white { height: 81px; background: #fafafa; }
.b-blue { background: #0078d7; }
.g { background: #ebebeb; }
.p { background: #f7eeec; }
.b-scroll { height: 20px; background: #9a9a9a; }

/* taskbar */
.taskbar {
  display: flex;
  height: 120px;
  gap: 3px;
  overflow: hidden;
  background: linear-gradient(90deg, #2c4450, #444 60px, #444 calc(100% - 45px), #22363f);
}
.sliver { width: 41px; align-self: center; height: 12px; background: radial-gradient(circle at -4px 50%, #18a0e0 6px, transparent 7px); }
.taskbar button { width: 144px; display: grid; place-items: center; border: 0; background: none; }
.taskbar svg { width: 72px; height: 72px; }
.taskbar .explorer { width: 64px; height: 54px; }
.aol { width: 72px; height: 72px; border-radius: 14px; background: #3399ff; color: #fff; font: 900 34px/68px Lato, sans-serif; }
.taskbar .running { background: linear-gradient(#76b9ed, #76b9ed) center bottom / 120px 6px no-repeat; }
.taskbar .current { background: linear-gradient(#76b9ed, #76b9ed) center bottom / 100% 6px no-repeat #6b6b6b; }
.desk { margin-left: auto; margin-right: -7px; align-self: center; color: #e4e4e4; font: 34px/48px "Open Sans", "Noto Sans", sans-serif; }
```
